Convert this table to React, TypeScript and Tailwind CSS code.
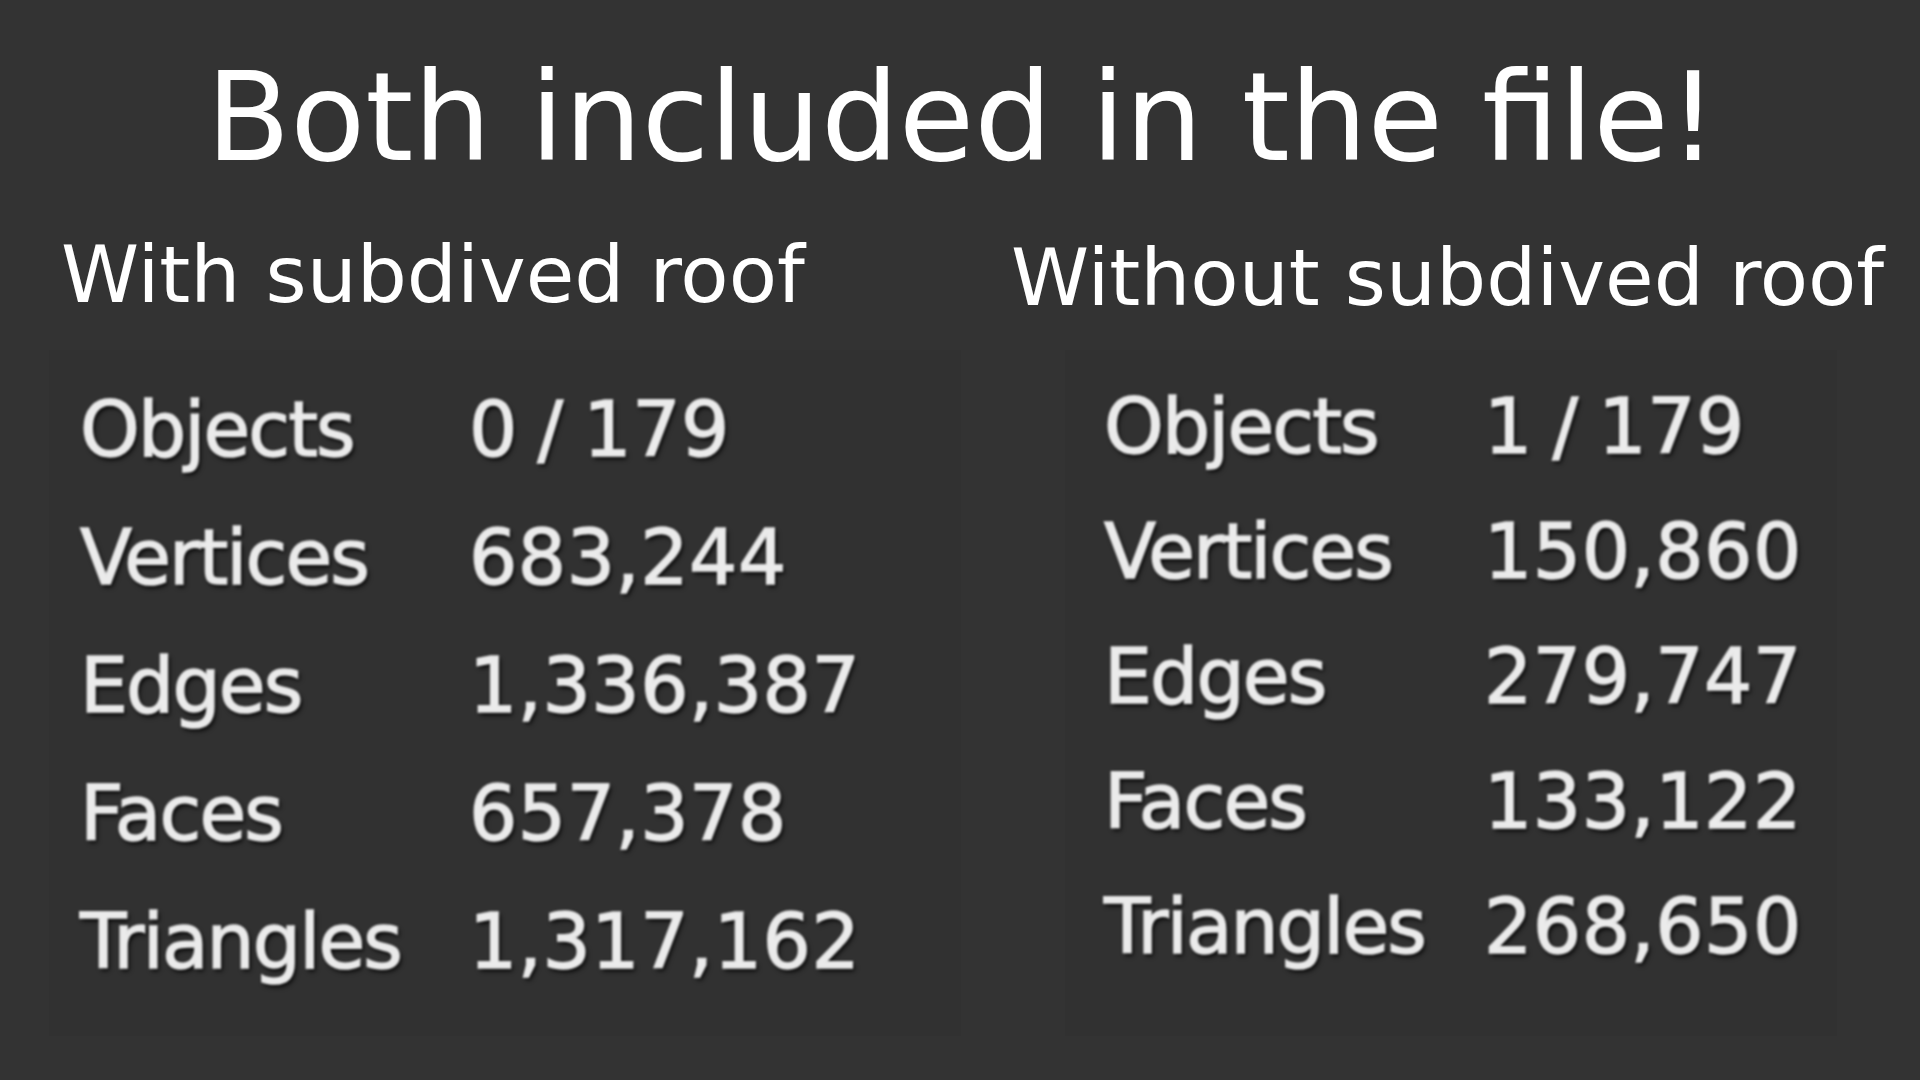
const left = [
  ["Objects", "0 / 179"],
  ["Vertices", "683,244"],
  ["Edges", "1,336,387"],
  ["Faces", "657,378"],
  ["Triangles", "1,317,162"],
];

const right = [
  ["Objects", "1 / 179"],
  ["Vertices", "150,860"],
  ["Edges", "279,747"],
  ["Faces", "133,122"],
  ["Triangles", "268,650"],
];

const Stats = ({ rows, labelW, rowH }: { rows: string[][]; labelW: string; rowH: string }) => {
  return (
    <div className="text-[76px] text-[#ebebeb] blur-[1.3px] [-webkit-text-stroke:1.5px_#e4e4e4] [text-shadow:2px_3px_4px_rgba(0,0,0,0.9)]">
      {rows.map(([k, v]) => (
        <div key={k} className={`flex ${rowH}`}>
          <span className={`${labelW} tracking-[-1.9px]`}>{k}</span>
          <span className="tracking-[0.5px] [word-spacing:-5px]">{v}</span>
        </div>
      ))}
    </div>
  );
};

export default function App() {
  return (
    <div className="w-full h-screen overflow-hidden bg-[#333333] text-white font-['DejaVu_Sans',sans-serif]">
      {/* TITLE */}
      <h1 className="pt-[57px] pl-[4px] text-center text-[122.6px] leading-none">Both included in the file!</h1>

      {/* COLUMNS */}
      <div className="flex mt-[56px]">
        {/* LEFT */}
        <div className="w-[965px] pl-[49px] shrink-0">
          <h2 className="pl-[12px] text-[79px] leading-none">With subdived roof</h2>
          <div className="mt-[35px] w-[912px] h-[686px] bg-[#313131] pl-[31px] pt-[16px]">
            <Stats rows={left} labelW="w-[389px]" rowH="h-[128px] leading-[128px]" />
          </div>
        </div>

        {/* RIGHT */}
        <div className="pl-[46px]">
          <h2 className="mt-[3px] text-[79px] leading-none">Without subdived roof</h2>
          <div className="mt-[32px] ml-[54px] w-[772px] h-[686px] bg-[#313131] pl-[39px] pt-[14px]">
            <Stats rows={right} labelW="w-[380px]" rowH="h-[125px] leading-[125px]" />
          </div>
        </div>
      </div>
    </div>
  );
}
